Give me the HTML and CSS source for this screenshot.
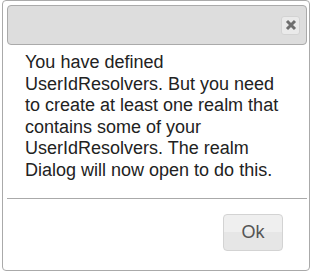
FILE: index.html
```html
<!DOCTYPE html>
<html>
<head>
<meta charset="utf-8">
<link rel="stylesheet" href="styles.css">
</head>
<body>
<div class="dialog">
  <div class="titlebar">
    <button class="close" title="close">
      <svg width="12" height="12" viewBox="0 0 12 12"><path d="M2 2 L10 10 M10 2 L2 10" stroke="#6e6e6e" stroke-width="3" stroke-linecap="butt"/></svg>
    </button>
  </div>
  <div class="content">You have defined UserIdResolvers. But you need to create at least one realm that contains some of your UserIdResolvers. The realm Dialog will now open to do this.</div>
  <div class="buttonpane">
    <button class="btn">Ok</button>
  </div>
</div>
</body>
</html>
```
FILE: styles.css
```css
html, body {
  margin: 0;
  padding: 0;
  background: #ffffff;
}
body {
  padding: 0 0 0 2px;
  font-family: "Liberation Sans", Arial, sans-serif;
}
.dialog {
  box-sizing: border-box;
  width: 308px;
  height: 271px;
  border: 1px solid #aaaaaa;
  border-radius: 4px;
  padding: 4px 2px 4px 4px;
  background: #ffffff;
  display: flex;
  flex-direction: column;
}
.titlebar {
  box-sizing: border-box;
  height: 40px;
  background: #dddddd;
  border: 1px solid #aaaaaa;
  border-radius: 4px;
  display: flex;
  align-items: center;
  justify-content: flex-end;
  padding-right: 6px;
}
.close {
  box-sizing: border-box;
  width: 19px;
  height: 19px;
  padding: 0;
  margin: 0;
  border: 1px solid #d3d3d3;
  border-radius: 3px;
  background: #eaeaea;
  display: flex;
  align-items: center;
  justify-content: center;
}
.content {
  padding: 7px 18px 16px 18px;
  font-size: 18px;
  line-height: 21.6px;
  color: #222222;
}
.buttonpane {
  border-top: 1px solid #aaaaaa;
  display: flex;
  justify-content: flex-end;
  padding: 15px 24px 0 0;
}
.btn {
  box-sizing: border-box;
  width: 60px;
  height: 37px;
  margin: 0;
  padding: 0;
  border: 1px solid #d3d3d3;
  border-radius: 4px;
  background: linear-gradient(#efefef 0%, #efefef 50%, #e6e6e6 50%, #e6e6e6 100%);
  color: #555555;
  font-family: "Liberation Sans", Arial, sans-serif;
  font-size: 18px;
}
```
